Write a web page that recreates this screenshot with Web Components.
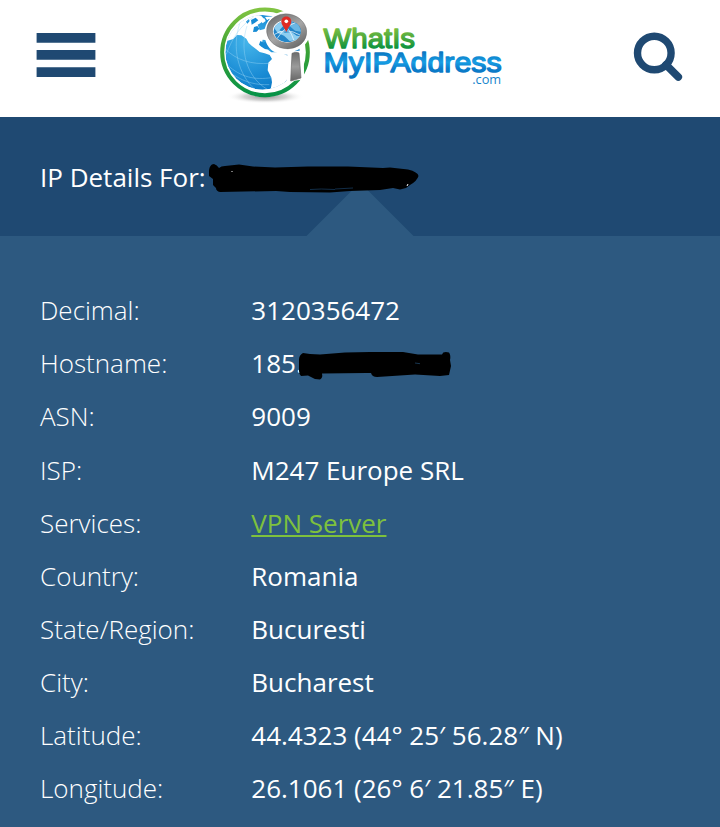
<!DOCTYPE html>
<html lang="en">
<head>
<meta charset="utf-8">
<title>IP Details</title>
<style>
html,body{margin:0;padding:0;background:#2d5980}
body{font-family:"Open Sans","Noto Sans",sans-serif;font-size:26px;color:#fff;width:720px;height:827px;overflow:hidden}
</style>
</head>
<body>
<ip-page></ip-page>
<script>
const define = (name, html) => customElements.define(name, class extends HTMLElement {
  constructor() {
    super();
    this.attachShadow({mode: 'open'}).innerHTML = html;
  }
});

define('menu-button', `<style>:host{display:block;width:60px;height:44px}svg{display:block}</style>
<svg width="60" height="44" fill="#1f4972"><path d="M.6 0h58.8v9.7H.6zM.6 17h58.8v9.8H.6zM.6 34.2h58.8V44H.6z"/></svg>`);

define('search-button', `<style>:host{display:block;width:52px;height:52px}svg{display:block}</style>
<svg width="52" height="52" fill="none" stroke="#1f4972"><circle cx="22.3" cy="21" r="16.8" stroke-width="7.4"/><path d="M34 32.7L46.3 45" stroke-width="7.6" stroke-linecap="round"/></svg>`);

define('globe-mark', `<style>:host{display:block;width:110px;height:110px}svg{display:block}</style>
<svg width="110" height="110" viewBox="0 0 330 330">
<defs>
<linearGradient id="ring" x1="0" y1="0" x2="0" y2="1"><stop offset="0" stop-color="#80c342"/><stop offset=".45" stop-color="#3da335"/><stop offset="1" stop-color="#079247"/></linearGradient>
<radialGradient id="sea" cx=".3" cy=".35" r=".75"><stop offset="0" stop-color="#45b5ea"/><stop offset=".6" stop-color="#1c8ed6"/><stop offset="1" stop-color="#0877c5"/></radialGradient>
<linearGradient id="rim" x1="0" y1="0" x2="1" y2="1"><stop offset="0" stop-color="#6c6c6c"/><stop offset=".5" stop-color="#a6a6a6"/><stop offset="1" stop-color="#636363"/></linearGradient>
<linearGradient id="grip" x1="0" y1="0" x2="0" y2="1"><stop offset="0" stop-color="#6b6b6b"/><stop offset=".5" stop-color="#9b9b9b"/><stop offset="1" stop-color="#666"/></linearGradient>
<radialGradient id="shade"><stop offset="0" stop-color="#777" stop-opacity=".8"/><stop offset=".55" stop-color="#aaa" stop-opacity=".5"/><stop offset="1" stop-color="#fff" stop-opacity="0"/></radialGradient>
<clipPath id="ball"><circle cx="158" cy="157" r="112"/></clipPath>
<clipPath id="lens"><ellipse cx="232" cy="94" rx="41" ry="32"/></clipPath>
</defs>
<ellipse cx="166" cy="290" rx="115" ry="21" fill="url(#shade)"/>
<circle cx="165" cy="157" r="134" fill="#fff"/>
<circle cx="165" cy="157" r="128.5" fill="none" stroke="url(#ring)" stroke-width="12"/>
<g clip-path="url(#ball)">
<circle cx="158" cy="157" r="112" fill="url(#sea)"/>
<g fill="#fff">
<path d="M56 105L65 87 91 65 119 45 141 43 154 48 163 58 153 68 143 74 149 91 161 88 173 83 179 98 188 113 173 121 158 119 155 132 160 144 174 149 184 157 197 157 214 158 240 170 258 190 249 211 232 237 209 269 187 286 181 273 186 247 184 233 173 211 175 188 186 177 179 165 164 160 149 156 138 147 125 137 116 129 109 116 94 106 81 105 70 117 50 123Z"/>
<path d="M165 51L194 49 203 58 190 75 177 68Z"/>
</g>
<g fill="#168bd4"><path d="M123 60l14-7 8 8-10 7-10 6zM132 81l10-3 6 8-8 9-11 1zM108 65l8-7 3 5-7 8zM167 63l11-7 3 5-11 8z"/><path d="M151 123l10 5 8-4 7 9 11 3-4 7 14 5 9 8-12-2-15-8-12 2-12-7-8-7z"/></g>
<path d="M151 61l12-6 4 8-9 7z" fill="#fff"/>
<g fill="none" stroke="#9bd7f5" stroke-width="1.7" opacity=".75"><path d="M89 71C65 144 84 222 135 269M111 78c-23 70-2 154 61 190M43 144c36 38 83 50 137 46M51 194c43 39 83 46 134 39M70 224c38 25 70 31 108 30M49 163C66 115 91 77 130 52"/></g>
</g>
<path d="M163 97C164 65 190 37 226 32l40 1c32 8 43 38 34 73-8 27-27 43-49 48l29-3 3 87-54 8 3-82c-38 1-68-18-69-67z" fill="#fff"/>
<ellipse cx="230" cy="94" rx="51" ry="43" transform="rotate(9 230 94)" fill="#fff" stroke="url(#rim)" stroke-width="19"/>
<ellipse cx="230" cy="94" rx="60" ry="52" transform="rotate(9 230 94)" fill="none" stroke="#666" stroke-width="2" opacity=".6"/>
<g clip-path="url(#lens)"><path d="M185 57h95v78h-95z" fill="#2386c9"/><path d="M186 74l20-15 13-2 4 17-15 17 17 7 20-2 15 11 12 2-12 12-21 2-17-16-19-8z" fill="#8ecef0"/><path d="M239 65l26 7 10 24-20-4-17-15z" fill="#6ab6e3"/><path d="M192 104q34-24 78 1M201 116q24-37 57-49M213 66q27 19 39 56" fill="none" stroke="#fff" stroke-width="2"/></g>
<path d="M229 96C224 82 214 75 214 65c0-21 30-21 30 0 0 10-11 17-15 31z" fill="#df2b24"/><circle cx="229" cy="64" r="5.5" fill="#fff"/>
<path d="M246 160q13-6 21-1l6 75-31 9z" fill="url(#grip)"/><path d="M246 160q13-6 21-1l6 75-31 9z" fill="none" stroke="#686868" stroke-width="2"/>
</svg>`);

define('word-mark', `<style>:host{display:block;width:190px;height:80px}svg{display:block;overflow:visible}text{font-family:"Liberation Sans",Arial,sans-serif}</style>
<svg width="190" height="80" viewBox="315 15 190 80">
<defs>
<linearGradient id="g" gradientUnits="userSpaceOnUse" x1="0" y1="27" x2="0" y2="49"><stop offset="0" stop-color="#80c241"/><stop offset=".45" stop-color="#52ab3e"/><stop offset="1" stop-color="#07913f"/></linearGradient>
<linearGradient id="b" gradientUnits="userSpaceOnUse" x1="0" y1="51" x2="0" y2="78"><stop offset="0" stop-color="#0873be"/><stop offset=".42" stop-color="#169de3"/><stop offset=".65" stop-color="#0b7dcb"/><stop offset="1" stop-color="#0874bf"/></linearGradient>
</defs>
<g stroke-linejoin="round" stroke-linecap="round" stroke-width="1.4">
<text x="323.6" y="47.8" font-size="28.5" textLength="91.4" lengthAdjust="spacingAndGlyphs" fill="url(#g)" stroke="url(#g)">WhatIs</text>
<text x="323.6" y="72.4" font-size="28.5" textLength="178" lengthAdjust="spacingAndGlyphs" fill="url(#b)" stroke="url(#b)">MyIPAddress</text>
</g>
<text x="472.2" y="83.5" font-size="13" textLength="29" lengthAdjust="spacingAndGlyphs" fill="#1684cc" style="font-family:'Open Sans',sans-serif">.com</text>
</svg>`);

define('site-header', `<style>
:host{display:flex;box-sizing:border-box;height:117px;background:#fff;padding:0 36px;align-items:flex-start}
menu-button{margin-top:33px}search-button{margin:32px 0 0 auto}.brand{display:flex;margin-left:114px}word-mark{margin:15px 0 0 -5px}
</style><menu-button></menu-button><div class="brand"><globe-mark></globe-mark><word-mark></word-mark></div><search-button></search-button>`);

define('ip-title', `<style>
:host{display:block;position:relative;box-sizing:border-box;height:119px;padding:42px 40px 0;background:#1f4972;line-height:36px;white-space:nowrap}
svg{position:absolute;left:0;top:0}
</style><slot></slot>
<svg width="720" height="119" viewBox="0 117 720 119"><path d="M306.5 236L360 182.5 413.5 236z" fill="#2d5980"/>
<path d="M209 172C209 167 211 164 214 164Q217 165 219 168Q221 166 225 166L239 164.5 253 166.5 275 167.5 308 166.5 348 166.5 383 168 390 167.5 408 169.5Q418 172 418.5 176Q417 181 410 185L406 188 400 189.5 393 188 380 190 350 191 330 192.5 290 192 276 191 220 192Q216 191 216 188L213 185 213 179 209 176Z"/>
<path d="M310 189.5q10-1 25 0M335 189l18-1" fill="none" stroke="#173959" stroke-width=".8"/><path d="M407 186l1-2" stroke="#fff"/><path d="M231 171.5h2" stroke="#777"/></svg>`);

define('ip-row', `<style>
:host{display:grid;grid-template-columns:211.3px 1fr;height:53.1px;line-height:53.1px;white-space:nowrap}
.label{font-weight:300}::slotted(a){color:#7ec13d;text-decoration:underline}
.value{position:relative}
</style><span class="label"><slot name="label"></slot></span><span class="value"><slot></slot></span>`);

define('ink-mark', `<style>:host{position:absolute;left:46.7px;top:11.5px;width:154px;height:32px}svg{display:block}</style>
<svg width="154" height="32" viewBox="298 349 154 32"><path d="M299 360Q299 355 303 353L310 354 320 354.5 345 352.5 370 352 403 352 418 354.5 442 354.5Q443 351 449 352.5Q451 355 450 360L451 366 449 375 440 376 415 374.5 377 377Q372 377 371 373L366 373 322 373.5Q323 378 320 379.5L315 379 308 375.5 301 376Q299 374 299 371Z"/><path d="M415 363l5 .7" stroke="#183650"/></svg>`);

define('ip-page', `<style>:host{display:block;height:827px;background:#2d5980}.rows{display:grid;padding:48.3px 40px 0}</style>
<site-header></site-header>
<ip-title>IP Details For:</ip-title>
<div class="rows">
<ip-row><span slot="label">Decimal:</span>3120356472</ip-row>
<ip-row><span slot="label">Hostname:</span>185.<ink-mark></ink-mark></ip-row>
<ip-row><span slot="label">ASN:</span>9009</ip-row>
<ip-row><span slot="label">ISP:</span>M247 Europe SRL</ip-row>
<ip-row><span slot="label">Services:</span><a href="#">VPN Server</a></ip-row>
<ip-row><span slot="label">Country:</span>Romania</ip-row>
<ip-row><span slot="label">State/Region:</span>Bucuresti</ip-row>
<ip-row><span slot="label">City:</span>Bucharest</ip-row>
<ip-row><span slot="label">Latitude:</span>44.4323 (44° 25′ 56.28″ N)</ip-row>
<ip-row><span slot="label">Longitude:</span>26.1061 (26° 6′ 21.85″ E)</ip-row>
</div>`);
</script>
</body>
</html>
